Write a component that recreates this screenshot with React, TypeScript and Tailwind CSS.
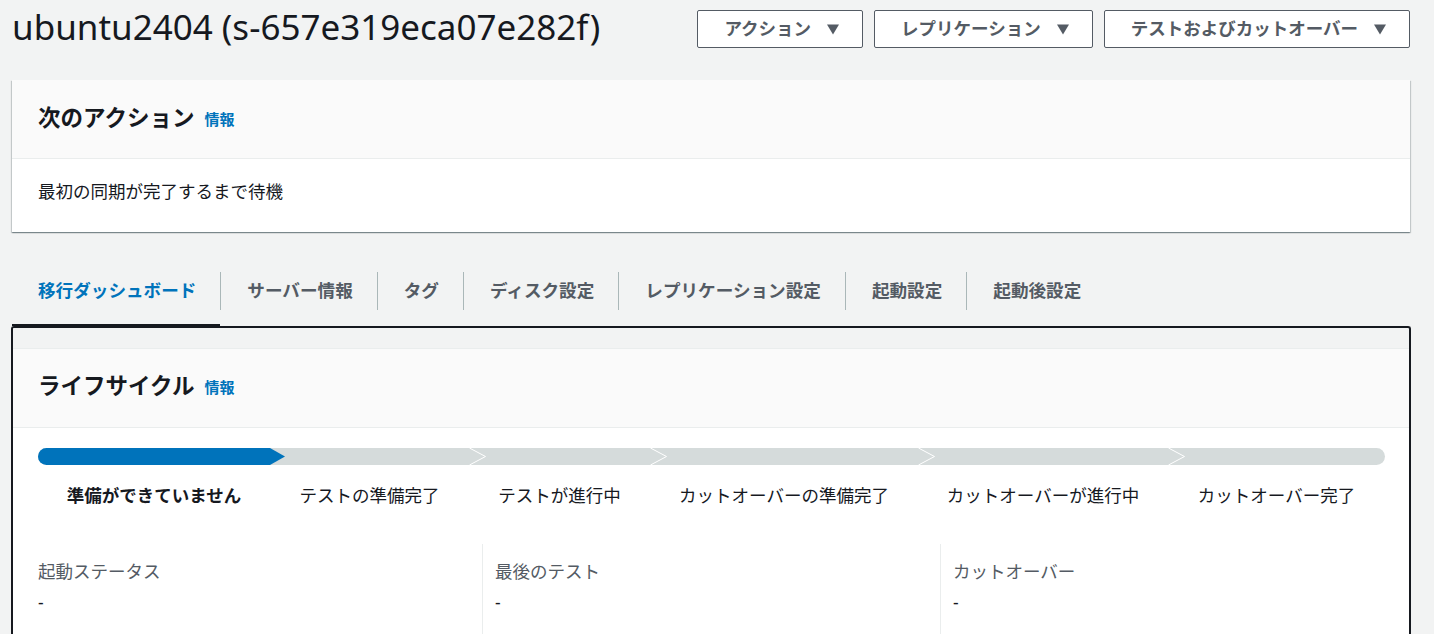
import React from "react";

const FONT = { fontFamily: '"Noto Sans", "Noto Sans CJK JP", sans-serif' };

function Caret() {
  return (
    <svg width="12" height="11" viewBox="0 0 12 11" className="shrink-0">
      <polygon points="0,0.5 12,0.5 6,10.5" fill="#545b64" />
    </svg>
  );
}

function Btn({ label }: { label: string }) {
  return (
    <button className="h-[38px] flex items-center gap-4 pl-[26px] pr-[23px] border border-[#545b64] rounded-[2px] bg-white text-[17.5px] font-bold text-[#545b64] leading-none">
      <span>{label}</span>
      <Caret />
    </button>
  );
}

const tabs = [
  "移行ダッシュボード",
  "サーバー情報",
  "タグ",
  "ディスク設定",
  "レプリケーション設定",
  "起動設定",
  "起動後設定",
];

const segWidths = ["w-[232px]", "w-[199px]", "w-[181px]", "w-[268px]", "w-[250px]", "w-[217px]"];
const steps = [
  "準備ができていません",
  "テストの準備完了",
  "テストが進行中",
  "カットオーバーの準備完了",
  "カットオーバーが進行中",
  "カットオーバー完了",
];

const cardShadow =
  "shadow-[0_1px_1px_0_rgba(0,28,36,0.3),1px_1px_1px_0_rgba(0,28,36,0.15),-1px_1px_1px_0_rgba(0,28,36,0.15)]";

export default function App() {
  return (
    <div style={FONT} className="min-h-[634px] bg-[#f2f3f3] pl-[12px] pr-[24px] text-[#16191f] overflow-hidden">
      {/* Header */}
      <div className="flex justify-between h-[80px]">
        <h1 className="mt-[7px] text-[35px] leading-[40px] font-normal text-[#16191f]">
          ubuntu2404 (s-657e319eca07e282f)
        </h1>
        <div className="flex gap-[11px] mt-[10px] h-[38px]">
          <Btn label="アクション" />
          <Btn label="レプリケーション" />
          <Btn label="テストおよびカットオーバー" />
        </div>
      </div>

      {/* Next action card */}
      <div className={`bg-white ${cardShadow}`}>
        <div className="h-[79px] bg-[#fafafa] border-b border-[#eaeded] flex items-center px-[26px] pb-[2px]">
          <span className="text-[22.5px] font-bold leading-none">次のアクション</span>
          <span className="ml-[10px] text-[15px] font-bold text-[#0073bb] leading-none mt-[2px]">情報</span>
        </div>
        <div className="h-[73px] px-[26px] pt-[20px] text-[17.5px] leading-6">
          最初の同期が完了するまで待機
        </div>
      </div>

      {/* Tabs */}
      <div className="flex items-stretch h-[71px] mt-[23px]">
        {tabs.map((t, i) => (
          <React.Fragment key={t}>
            {i > 0 && <div className="w-px h-[38px] self-center bg-[#aab7b8] mt-[1px]" />}
            <div
              className={
                i === 0
                  ? "flex items-center pl-[26px] pr-[24px] pt-[2px] border-b-[2px] border-[#16191f] text-[17.6px] font-bold text-[#0073bb]"
                  : "flex items-center pl-[26px] pr-[24px] pt-[2px] border-b-[2px] border-transparent text-[17.6px] font-bold text-[#545b64]"
              }
            >
              {t}
            </div>
          </React.Fragment>
        ))}
      </div>

      {/* Tab panel */}
      <div className="-mx-px border-x-2 border-t-2 border-[#16191f] rounded-t-[3px] pt-[20px] h-[320px]">
        <div className="bg-white h-full">
          <div className="h-[80px] bg-[#fafafa] border-y border-[#eaeded] flex items-center px-[25px] pb-[3px]">
            <span className="text-[22.5px] font-bold leading-none">ライフサイクル</span>
            <span className="ml-[10px] text-[15px] font-bold text-[#0073bb] leading-none mt-[2px]">情報</span>
          </div>
          <div className="px-[25px] pt-[20px]">
            {/* progress bar */}
            <div className="flex h-[17px] rounded-full bg-[#d5dbdb] overflow-hidden w-[1347px]">
              {segWidths.map((w, i) => (
                <div key={i} className={`relative h-full shrink-0 ${w} ${i === 0 ? "bg-[#0073bb] z-10" : ""}`}>
                  {i === 0 && (
                    <svg width="15" height="17" viewBox="0 0 15 17" className="absolute left-full top-0">
                      <polygon points="0,0 15,8.5 0,17" fill="#0073bb" />
                    </svg>
                  )}
                  {i > 1 && (
                    <svg width="18" height="17" viewBox="0 0 18 17" className="absolute left-0 top-0">
                      <polyline points="0.5,0 16.5,8.5 0.5,17" fill="none" stroke="#ffffff" strokeWidth="1" />
                    </svg>
                  )}
                </div>
              ))}
            </div>
            {/* labels */}
            <div className="flex mt-[18px] w-[1347px]">
              {steps.map((s, i) => (
                <div
                  key={s}
                  className={`${segWidths[i]} shrink-0 text-center text-[17.5px] leading-6 whitespace-nowrap ${
                    i === 0 ? "font-bold" : "font-normal"
                  }`}
                >
                  {s}
                </div>
              ))}
            </div>
            {/* columns */}
            <div className="grid grid-cols-[444px_458px_1fr] mt-[37px] h-[100px]">
              <div className="pt-[15px]">
                <div className="text-[17.5px] leading-6 text-[#545b64]">起動ステータス</div>
                <div className="mt-[7px] text-[17.5px] leading-6">-</div>
              </div>
              <div className="border-l border-[#eaeded] pl-[12px] pt-[15px]">
                <div className="text-[17.5px] leading-6 text-[#545b64]">最後のテスト</div>
                <div className="mt-[7px] text-[17.5px] leading-6">-</div>
              </div>
              <div className="border-l border-[#eaeded] pl-[12px] pt-[15px]">
                <div className="text-[17.5px] leading-6 text-[#545b64]">カットオーバー</div>
                <div className="mt-[7px] text-[17.5px] leading-6">-</div>
              </div>
            </div>
          </div>
        </div>
      </div>
    </div>
  );
}
